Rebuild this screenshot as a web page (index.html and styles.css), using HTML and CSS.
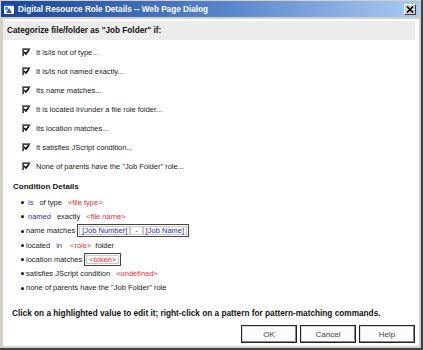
FILE: index.html
```html
<!DOCTYPE html>
<html lang="en">
<head>
    <meta charset="UTF-8">
    <title>Digital Resource Role Details -- Web Page Dialog</title>
    <link rel="stylesheet" href="styles.css">
</head>
<body>

    <section class="dialog">

        <div class="titlebar">
            <svg class="app-icon" width="12" height="12" viewBox="0 0 12 12">
                <rect x="0.5" y="0.5" width="11" height="11" fill="#ffffff" stroke="#1c3f94"/>
                <rect x="1" y="1" width="10" height="2" fill="#2a5ad0"/>
                <path d="M3 10 L6 5 L9 10 Z" fill="#2a5ad0"/>
                <rect x="2" y="4" width="3" height="3" fill="#4a9ee8"/>
            </svg>
            <span class="title">Digital Resource Role Details -- Web Page Dialog</span>
            <span class="close">
                <svg width="8" height="7" viewBox="0 0 8 7">
                    <path d="M1 0.5 L7 6.5 M7 0.5 L1 6.5" stroke="#000" stroke-width="1.6"/>
                </svg>
            </span>
        </div>

        <div class="client">

            <div class="heading">Categorize file/folder as "Job Folder" if:</div>

            <ul class="criteria">
                <li><span class="check"></span>It is/is not of type...</li>
                <li><span class="check"></span>It is/is not named exactly...</li>
                <li><span class="check"></span>Its name matches...</li>
                <li><span class="check"></span>It is located in/under a file role folder...</li>
                <li><span class="check"></span>Its location matches...</li>
                <li><span class="check"></span>It satisfies JScript condition...</li>
                <li><span class="check"></span>None of parents have the "Job Folder" role...</li>
            </ul>

            <div class="details-title">Condition Details</div>

            <ul class="details">
                <li><span class="kw">is</span> of type <span class="val">&lt;file type&gt;</span></li>
                <li><span class="kw">named</span> exactly <span class="val">&lt;file name&gt;</span></li>
                <li>name matches
                    <span class="pattern">
                        <span class="token">[Job Number]</span><span class="token sep">-</span><span class="token">[Job Name]</span>
                    </span>
                </li>
                <li>located <span class="kw">in</span> <span class="val">&lt;role&gt;</span> folder</li>
                <li>location matches
                    <span class="pattern">
                        <span class="token red">&lt;token&gt;</span>
                    </span>
                </li>
                <li>satisfies JScript condition <span class="val">&lt;undefined&gt;</span></li>
                <li>none of parents have the "Job Folder" role</li>
            </ul>

            <p class="hint">Click on a highlighted value to edit it; right-click on a pattern for pattern-matching commands.</p>

            <div class="buttons">
                <button>OK</button>
                <button>Cancel</button>
                <button>Help</button>
            </div>

        </div>

    </section>

</body>
</html>
```

FILE: styles.css
```css
body {
    margin: 0;
    font-family: "Liberation Sans", Arial, sans-serif;
    font-size: 7.5px;
    color: #222;
}

.dialog {
    width: 423px;
    height: 350px;
    box-sizing: border-box;
    background: #d4d0c8;
    border-right: 2px solid #404040;
    border-bottom: 2px solid #404040;
    display: flex;
    flex-direction: column;
}

.titlebar {
    height: 16px;
    margin: 1px 1px 0 1px;
    display: flex;
    align-items: center;
    padding: 0 4px 0 2px;
    background: linear-gradient(to right, #17459a, #5a86cc 55%, #a8ccf2);
    color: #fff;
}

.app-icon {
    flex: none;
    margin-right: 3px;
}

.title {
    flex: 1;
    font-weight: bold;
    font-size: 8.2px;
}

.close {
    width: 10px;
    height: 9px;
    background: #d4d0c8;
    border: 1px solid;
    border-color: #fff #404040 #404040 #fff;
    display: flex;
    align-items: center;
    justify-content: center;
}

.client {
    flex: 1;
    margin: 2px 2px 2px 3px;
    background: #fff;
    padding: 2px 4px 0 0;
    display: flex;
    flex-direction: column;
}

.heading {
    height: 19px;
    line-height: 19px;
    background: #ececec;
    font-weight: bold;
    font-size: 8.2px;
    padding-left: 4px;
    color: #111;
}

.criteria {
    list-style: none;
    margin: 3px 0 0 0;
    padding: 0 0 0 19px;
}

.criteria li {
    height: 19px;
    display: flex;
    align-items: center;
}

.check {
    width: 9px;
    height: 9px;
    box-sizing: border-box;
    border: 1px solid;
    border-color: #808080 #fff #fff #808080;
    box-shadow: inset 1px 1px 0 #404040;
    margin-right: 5px;
    background: #fff url("data:image/svg+xml,%3Csvg xmlns='http://www.w3.org/2000/svg' width='7' height='7'%3E%3Cpath d='M1 3 L3 5 L6 1' fill='none' stroke='%23000' stroke-width='1.5'/%3E%3C/svg%3E") center no-repeat;
}

.details-title {
    margin: 6px 0 0 10px;
    font-weight: bold;
    font-size: 8px;
    color: #111;
}

.details {
    margin: 4px 0 0 0;
    padding: 0 0 0 23px;
    list-style: none;
}

.details li {
    height: 14.3px;
    display: flex;
    align-items: center;
    gap: 4px;
    position: relative;
}

.details li::before {
    content: "";
    position: absolute;
    left: -5px;
    top: 6px;
    width: 3px;
    height: 3px;
    border-radius: 50%;
    background: #111;
}

.kw {
    color: #2b2bb8;
    margin: 0 2px;
}

.val {
    color: #e0303a;
    margin-left: 2px;
}

.pattern {
    display: inline-flex;
    border: 1px solid #444;
    padding: 1px;
    margin-left: -2px;
}

.token {
    color: #2b2bb8;
    border: 1px solid #c8c8c8;
    padding: 0 2px;
    line-height: 7px;
}

.token.sep {
    padding: 0 4px;
}

.token.red {
    color: #e0303a;
}

.hint {
    margin: auto 0 0 9px;
    font-weight: bold;
    font-size: 8.25px;
    color: #111;
}

.buttons {
    display: flex;
    justify-content: flex-end;
    gap: 3px;
    padding: 7px 0 3px 0;
}

.buttons button {
    width: 56px;
    height: 18px;
    font-family: inherit;
    font-size: 8px;
    color: #444;
    background: #fbfbfb;
    border: 1px solid #222;
    box-shadow: inset -1px -1px 0 #888, inset 1px 1px 0 #ddd;
    padding: 0;
}
```
